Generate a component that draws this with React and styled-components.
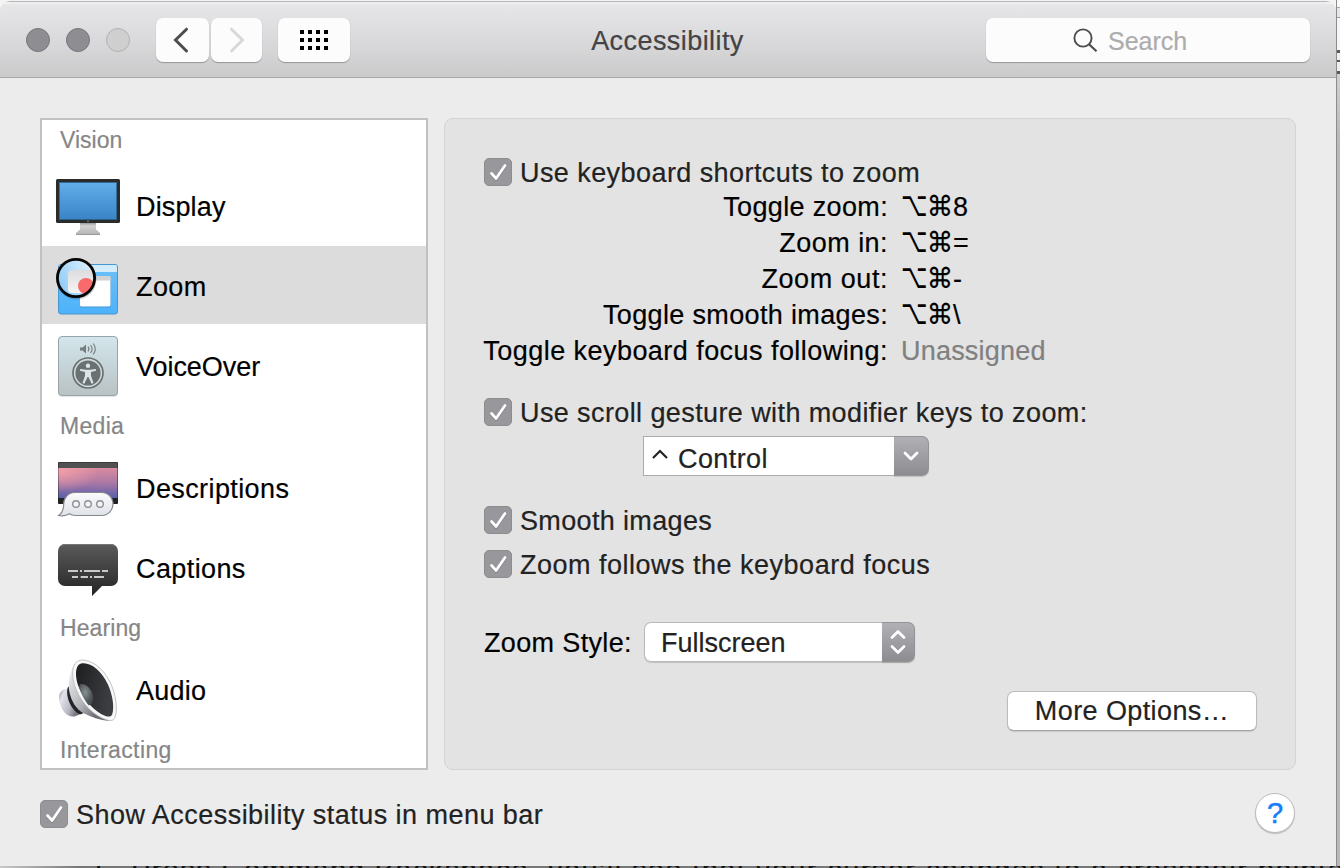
import React from 'react';
import styled, { createGlobalStyle } from 'styled-components';

const Global = createGlobalStyle`
  * { box-sizing: border-box; }
  body {
    margin: 0;
    overflow: hidden;
    background: #cfcfcf;
    font-family: "Liberation Sans", Arial, sans-serif;
    font-size: 27px;
    color: #000;
    -webkit-text-stroke: 0.2px currentColor;
  }
  svg { display: block; }
`;

const Desktop = styled.div`
  width: 1340px;
  height: 868px;
  display: flex;
  flex-direction: column;
  overflow: hidden;
  background: linear-gradient(#f4f4f4 0 30px, #b0b0b0 80px);
`;
const Upper = styled.div`
  display: flex;
  flex: 0 0 866px;
`;
const Backdrop = styled.div`
  flex: 0 0 4px;
  border-left: 1px solid #8c8c8c;
  background: linear-gradient(
    #fafafa 0 7px, #a8a8a8 7px 8px, #e6e6e6 8px 17px, #9a9a9a 17px 18px,
    #f6f6f6 18px 50px, #5a5a5e 50px 53px, #f0f0f0 53px 60px, #5a5a5e 60px 62px,
    #eee 62px 71px, #5a5a5e 71px 74px, #cfcfcf 74px 78px, #b9b9b9 140px 100%
  );
`;
const Underlay = styled.div`
  flex: 0 0 2px;
  height: 2px;
  overflow: hidden;
  display: flex;
  gap: 14px;
  padding-left: 90px;
  background: linear-gradient(90deg, #c8c8c8, #777 80px);
  font-size: 29px;
  line-height: 8px;
  letter-spacing: 1.4px;
  white-space: nowrap;
  color: #111;
`;

const Window = styled.main`
  flex: 0 0 1336px;
  display: flex;
  flex-direction: column;
  margin-top: 1px;
  border-radius: 10px 10px 0 0;
  overflow: hidden;
  background: #ececec;
`;
const TitleBar = styled.header`
  flex: 0 0 77px;
  display: flex;
  align-items: flex-start;
  padding: 16px 26px 0;
  border-top: 1px solid #b4b4b4;
  border-bottom: 1px solid #a9a9a9;
  background: linear-gradient(#f4f4f4 0, #e6e5e7 3px, #d9d8da 40px, #cbcacb 100%);
`;
const Lights = styled.div`
  display: flex;
  gap: 16px;
  margin-top: 10px;
  width: 130px;
`;
const Light = styled.span`
  width: 24px;
  height: 24px;
  border-radius: 50%;
  border: 1px solid ${(p) => (p.$off ? '#b1b0b2' : '#77767a')};
  background: ${(p) => (p.$off ? '#d0cfd0' : '#8e8d92')};
`;
const ToolButton = styled.button`
  width: ${(p) => p.$w}px;
  height: 44px;
  margin: 0 ${(p) => p.$gap}px 0 0;
  padding: 0 1px 0 0;
  display: flex;
  align-items: center;
  justify-content: center;
  border: 0;
  border-radius: 7px;
  background: #fcfcfc;
  box-shadow: 0 1px 1px rgba(0, 0, 0, 0.28);
`;
const Title = styled.h1`
  flex: 1;
  margin: 0;
  padding-right: 1px;
  font-size: 27px;
  font-weight: 400;
  line-height: 46px;
  letter-spacing: 0.43px;
  text-align: center;
  color: #444345;
`;
const SearchField = styled.div`
  width: 324px;
  height: 44px;
  display: flex;
  align-items: center;
  padding-left: 87px;
  gap: 9px;
  border-radius: 7px;
  background: #fcfcfc;
  box-shadow: 0 1px 1px rgba(0, 0, 0, 0.28);
  color: #acacac;
  font-size: 25px;
  line-height: 46px;
  span { padding-top: 2px; }
`;

const Body = styled.div`
  flex: 0 0 692px;
  display: flex;
  gap: 16px;
  padding: 40px 0 0 40px;
`;
const Sidebar = styled.nav`
  width: 388px;
  height: 652px;
  overflow: hidden;
  border: 2px solid #c1c1c1;
  background: #fff;
`;
const Group = styled.h2`
  margin: 0;
  height: ${(p) => (p.$first ? 46 : 42)}px;
  padding-left: 18px;
  font-size: 23px;
  font-weight: 400;
  line-height: 41px;
  letter-spacing: ${(p) => p.$ls ?? 0.1}px;
  color: #868686;
`;
const Item = styled.div`
  height: 80px;
  display: flex;
  align-items: center;
  gap: 16px;
  padding-left: 14px;
  border-bottom: 2px solid #fff;
  background: ${(p) => (p.$selected ? '#dcdcdc' : '#fff')};
  svg { margin-top: 2px; }
`;
const Label = styled.span`
  line-height: 30px;
  margin-top: 3px;
  letter-spacing: ${(p) => p.$ls ?? 0.4}px;
  white-space: nowrap;
`;

const Panel = styled.section`
  width: 852px;
  height: 652px;
  padding: 39px 38px 0 39px;
  border: 1px solid #d3d3d3;
  border-radius: 9px;
  background: #e3e3e3;
`;
const CheckRow = styled.label`
  height: 28px;
  display: flex;
  align-items: center;
  gap: 8px;
  margin-bottom: ${(p) => p.$mb ?? 0}px;
  color: #222;
  letter-spacing: ${(p) => p.$ls ?? 0.43}px;
  white-space: nowrap;
`;
const CheckText = styled.span`
  padding-top: 3px;
  line-height: 29px;
`;
const Box = styled.span`
  width: 28px;
  height: 28px;
  border-radius: 5px;
  border: 1px solid #8d8c91;
  background: #98979c;
`;
const Shortcuts = styled.dl`
  margin: 3px 0 29px;
  display: grid;
  grid-template-columns: 404px 1fr;
  grid-auto-rows: 36px;
  column-gap: 13px;
  line-height: 36px;
  white-space: nowrap;
`;
const Term = styled.dt`
  display: flex;
  justify-content: flex-end;
  letter-spacing: ${(p) => p.$ls ?? 0.45}px;
`;
const Keys = styled.dd`
  margin: 0;
  display: flex;
  color: ${(p) => (p.$muted ? '#808080' : '#000')};
  letter-spacing: ${(p) => (p.$muted ? 0.2 : 0)}px;
`;
const OptionKey = styled.span`
  width: 26px;
  font-family: "DejaVu Sans", sans-serif;
  font-size: 23px;
  -webkit-text-stroke: 0;
  transform: translateY(-3px) scaleY(1.5);
  transform-origin: 50% 52%;
`;
const CommandKey = styled.span`
  width: 26px;
  font-family: "DejaVu Sans", sans-serif;
  font-size: 26px;
  transform: translateY(-1px) scaleY(1.08);
`;

const Combo = styled.div`
  width: 286px;
  height: 40px;
  margin: 10px 0 30px 159px;
  display: flex;
`;
const ComboText = styled.div`
  flex: 1;
  display: flex;
  align-items: flex-start;
  gap: 10px;
  padding-left: 8px;
  border: 1px solid #ababab;
  border-right: 0;
  background: #fff;
  color: #222;
  line-height: 44px;
  letter-spacing: 0.4px;
  svg { margin-top: 12px; }
`;
const Stepper = styled.div`
  width: ${(p) => p.$w}px;
  display: flex;
  align-items: center;
  justify-content: center;
  border-radius: 0 7px 7px 0;
  border: solid #939297;
  border-width: 1px 1px 1px 0;
  background: linear-gradient(#b1b0b5, #8d8c91);
  box-shadow: 0 1px 1px rgba(0, 0, 0, 0.15);
`;
const StyleRow = styled.div`
  margin-top: 44px;
  height: 40px;
  display: flex;
  align-items: center;
  line-height: 41px;
`;
const StyleName = styled.span`
  width: 160px;
  padding-top: 3px;
  letter-spacing: 0.35px;
`;
const Popup = styled.div`
  width: 271px;
  height: 40px;
  display: flex;
  border-radius: 7px;
  box-shadow: 0 1px 1px rgba(0, 0, 0, 0.15);
`;
const PopupText = styled.div`
  flex: 1;
  padding-left: 16px;
  border: 1px solid #b9b9b9;
  border-right: 0;
  border-radius: 7px 0 0 7px;
  background: #fff;
  color: #222;
  line-height: 40px;
`;
const MoreButton = styled.button`
  display: block;
  width: 250px;
  height: 40px;
  margin: 29px 0 0 auto;
  padding: 0;
  border: 1px solid #bcbcbc;
  border-bottom-color: #a5a5a5;
  border-radius: 7px;
  background: #fff;
  box-shadow: 0 1px 1px rgba(0, 0, 0, 0.12);
  font: inherit;
  line-height: 38px;
  letter-spacing: 0.4px;
  color: #222;
`;
const Footer = styled.footer`
  display: flex;
  justify-content: space-between;
  align-items: center;
  height: 88px;
  padding: 0 41px 0 40px;
`;
const Help = styled.button`
  width: 40px;
  height: 40px;
  margin-top: -2px;
  padding: 0;
  border: 1px solid #bdbdbd;
  border-radius: 50%;
  background: #fff;
  box-shadow: 0 1px 1px rgba(0, 0, 0, 0.2);
  font: 500 29px/38px "Liberation Sans", sans-serif;
  -webkit-text-stroke: 0.5px #157efb;
  color: #157efb;
`;

const Check = ({ children, ...rest }) => (
  <CheckRow {...rest}>
    <Box>
      <svg width="26" height="26" viewBox="0 0 26 26" fill="none" strokeLinecap="round" strokeLinejoin="round">
        <path d="M6.500 15.500l4.600 5L20 7.500" stroke="#000" strokeOpacity=".15" strokeWidth="2.800" />
        <path d="M6.500 14.500l4.600 5L20 6.500" stroke="#fff" strokeWidth="2.700" />
      </svg>
    </Box>
    <CheckText>{children}</CheckText>
  </CheckRow>
);

const DisplayIcon = () => (
  <svg width="64" height="64" viewBox="0 0 64 64">
    <defs>
      <linearGradient id="screen" x2="0" y2="1"><stop stopColor="#61aeea" /><stop offset="1" stopColor="#3a84c6" /></linearGradient>
      <linearGradient id="stand" x2="0" y2="1"><stop stopColor="#8a8a8a" /><stop offset=".3" stopColor="#d2d2d2" /><stop offset="1" stopColor="#b2b2b2" /></linearGradient>
    </defs>
    <path d="M24 48h16v7.500l4 3.500v2H20v-2l4-3.500z" fill="url(#stand)" />
    <path d="M20 60.500h24" stroke="#999" />
    <rect y="5" width="64" height="44" rx="1.500" fill="#2a2c2c" />
    <rect x="3.300" y="8.500" width="57.400" height="37" fill="url(#screen)" stroke="#2a6596" strokeWidth=".6" />
    <circle cx="32" cy="47.200" r=".8" fill="#999" />
  </svg>
);

const ZoomIcon = () => (
  <svg width="64" height="64" viewBox="0 0 64 64">
    <defs>
      <linearGradient id="desk" x2="0" y2="1"><stop stopColor="#6ec0f6" /><stop offset="1" stopColor="#4db2fb" /></linearGradient>
      <linearGradient id="lens" x1="1" x2="0" y2=".6"><stop stopColor="#f2f9ff" /><stop offset="1" stopColor="#8fcbf7" /></linearGradient>
      <linearGradient id="pane" x2="0" y2="1"><stop stopColor="#dcdcde" /><stop offset="1" stopColor="#f8f4f4" /></linearGradient>
      <clipPath id="lensClip"><circle cx="20" cy="24" r="18.500" /></clipPath>
    </defs>
    <rect x="2.500" y="10.500" width="59" height="49.500" rx="2.500" fill="url(#desk)" stroke="#4795cf" />
    <path d="M3 18v-5a2 2 0 0 1 2-2h54a2 2 0 0 1 2 2v5z" fill="#d3ecfc" />
    <rect x="21" y="22.500" width="31" height="31" rx="1.500" fill="#2c78b4" opacity=".5" transform="translate(3 0)" />
    <rect x="24" y="22" width="30.500" height="30.500" rx="1.500" fill="#fff" />
    <path d="M24 26.500v-3a1.500 1.500 0 0 1 1.500-1.500h27.500a1.500 1.500 0 0 1 1.500 1.500v3z" fill="#d2d2d2" />
    <circle cx="20.500" cy="25.500" r="20" fill="#000" opacity=".18" />
    <g clipPath="url(#lensClip)">
      <rect width="40" height="44" fill="url(#lens)" />
      <rect x="12" y="16" width="40" height="23" rx="4" fill="url(#pane)" />
      <circle cx="30" cy="32" r="8" fill="#f96b6b" />
    </g>
    <circle cx="20" cy="24" r="18.600" fill="none" stroke="#050505" strokeWidth="2.800" />
  </svg>
);

const VoiceOverIcon = () => (
  <svg width="64" height="64" viewBox="0 0 64 64">
    <defs>
      <linearGradient id="plate" x2="0" y2="1"><stop stopColor="#d3e6eb" /><stop offset="1" stopColor="#b9c2c4" /></linearGradient>
    </defs>
    <rect x="2" y="3" width="60" height="60" rx="4" fill="#000" opacity=".1" />
    <rect x="2.500" y="2.500" width="59" height="59" rx="3.500" fill="url(#plate)" stroke="#98a4a7" />
    <path d="M24 13.500h2.500l3.500-3v9l-3.500-3H24z" fill="#747c7e" />
    <path d="M32 12.600q1.800 2.400 0 4.800M34.600 11q3 4 0 8M37.200 9.500q4.300 5.500 0 11" fill="none" stroke="#747c7e" strokeWidth="1.100" />
    <circle cx="32" cy="39" r="15" fill="#d0d9db" stroke="#697173" strokeWidth="1.700" />
    <circle cx="32" cy="39" r="12.600" fill="#697173" />
    <circle cx="32" cy="31.700" r="2.200" fill="#dce3e5" />
    <path d="M24 35l5.800.8h4.400L40 35v1.800l-5 1.300v3.600l2.500 7.400-1.800.6L32.400 43h-.8l-3.300 6.700-1.800-.6 2.500-7.400v-3.600l-5-1.300z" fill="#dce3e5" />
  </svg>
);

const DescriptionsIcon = () => (
  <svg width="64" height="64" viewBox="0 0 64 64">
    <defs>
      <linearGradient id="sky" x2="0" y2="1"><stop stopColor="#d98ba0" /><stop offset=".45" stopColor="#b07aa4" /><stop offset="1" stopColor="#595eaa" /></linearGradient>
      <radialGradient id="glow" cx="0" cy=".1" r=".7"><stop stopColor="#fba6aa" stopOpacity=".75" /><stop offset="1" stopColor="#fba6aa" stopOpacity="0" /></radialGradient>
      <linearGradient id="cloud" x2="0" y2="1"><stop stopColor="#fafbfc" /><stop offset="1" stopColor="#dfe2e8" /></linearGradient>
    </defs>
    <rect x="2" y="6" width="60" height="42" rx="1" fill="#222" />
    <rect x="2.500" y="6.500" width="59" height="5.500" fill="#515151" />
    <rect x="2.500" y="12" width="59" height="30" fill="url(#sky)" />
    <rect x="2.500" y="12" width="59" height="30" fill="url(#glow)" />
    <path d="M19 36.500h26.500a11.500 11.500 0 0 1 0 23H19c-2.500 0-4-.6-5.500-1.700-3 1.900-7 2.400-11 1.700 3.500-2.300 5.200-5.500 5.200-11C7.500 42 12 36.500 19 36.500z" fill="url(#cloud)" stroke="#858890" strokeWidth="1.200" />
    <g fill="#f3f4f6" stroke="#8f9094" strokeWidth="1.400">
      <circle cx="20" cy="48" r="3.300" /><circle cx="32" cy="48" r="3.300" /><circle cx="44" cy="48" r="3.300" />
    </g>
  </svg>
);

const CaptionsIcon = () => (
  <svg width="64" height="64" viewBox="0 0 64 64">
    <defs>
      <linearGradient id="bubble" x2="0" y2="1"><stop stopColor="#5b5b5b" /><stop offset="1" stopColor="#242424" /></linearGradient>
    </defs>
    <path d="M9 8h46a7 7 0 0 1 7 7v28a7 7 0 0 1-7 7h-9L36 60V50H9a7 7 0 0 1-7-7V15a7 7 0 0 1 7-7z" fill="url(#bubble)" />
    <path d="M5 9.700Q7 8.500 9 8.500h46q2 0 4 1.200" fill="none" stroke="#777" />
    <path d="M12 35h10M24 35h2M28 35h16M46 35h6M16 41h6M24.700 41H32M34 41h2M38 41h10" stroke="#c9c9c9" strokeWidth="2" />
  </svg>
);

const AudioIcon = () => (
  <svg width="64" height="64" viewBox="0 0 64 64">
    <defs>
      <linearGradient id="cone" x2="1" y2="1"><stop stopColor="#f4f4f6" /><stop offset=".5" stopColor="#b4b5bb" /><stop offset=".8" stopColor="#6b6c72" /></linearGradient>
      <linearGradient id="cap" x2="1" y2=".6"><stop stopColor="#84868e" /><stop offset=".25" stopColor="#e3e3ec" /><stop offset=".7" stopColor="#b8b9c3" /><stop offset="1" stopColor="#74757d" /></linearGradient>
      <linearGradient id="dish" x2="1" y2=".3"><stop stopColor="#1d1e20" /><stop offset="1" stopColor="#3c3d40" /></linearGradient>
      <radialGradient id="dome" cx=".45" cy=".4"><stop stopColor="#889094" /><stop offset="1" stopColor="#4b5054" /></radialGradient>
    </defs>
    <path d="M10 31C4 32 2 37 3.500 44c2 9 8 15.500 15 14.500l5-2L14 30z" fill="url(#cap)" />
    <path d="M12 29c-3 7 2 23 12 27.500l5-2L17 27z" fill="#232427" />
    <path d="M17.500 7c-3.500 8-5.500 17-4.500 25 2 11 7 19 14 23 8 4 17 7 26 8L40 20z" fill="url(#cone)" />
    <path d="M24.500 2.200C35 1 47 10 54 24c6 12 8 27 5 35.500-1 3-4 3.700-8 2.500C38 58 26 46 20 31 15 19 15 3.500 24.500 2.200z" fill="#f7f7f8" stroke="#b4b5ba" strokeWidth=".8" />
    <path d="M26.500 5.300C35.500 4.600 45.500 13 51.700 26c5 10.500 6.800 23.500 4.600 30-1 3-3.800 3-6.800 2C39 54 28.500 43 23 29.500 18.700 19 18.500 6 26.500 5.300z" fill="url(#dish)" />
    <path d="M24 26c6-1 12 5 13 12 .5 4-1 8-4 9.500C28.500 43 25 35 22.800 29z" fill="url(#dome)" />
  </svg>
);

const shortcuts = [
  { name: 'Toggle zoom:', key: '8', ls: 0.35 },
  { name: 'Zoom in:', key: '=', ls: 0.45 },
  { name: 'Zoom out:', key: '-', ls: 0.55 },
  { name: 'Toggle smooth images:', key: '\\', ls: 0.35 },
];

export default function App() {
  return (
    <>
      <Global />
      <Desktop>
        <Upper>
          <Window>
            <TitleBar>
              <Lights><Light /><Light /><Light $off /></Lights>
              <ToolButton $w={53} $gap={2} aria-label="Back">
                <svg width="20" height="28" viewBox="0 0 20 28"><path d="M14.500 3.200L3.500 14l11 11" fill="none" stroke="#4d4d4d" strokeWidth="3" strokeLinecap="round" /></svg>
              </ToolButton>
              <ToolButton $w={51} $gap={16} aria-label="Forward">
                <svg width="20" height="28" viewBox="0 0 20 28"><path d="M5.500 3.200L16.500 14l-11 11" fill="none" stroke="#d8d8d8" strokeWidth="3" strokeLinecap="round" /></svg>
              </ToolButton>
              <ToolButton $w={72} $gap={0} aria-label="Show all">
                <svg width="28" height="20" viewBox="0 0 28 20">
                  {[0, 8, 16].map((y) => [0, 8, 16, 24].map((x) => <rect key={`${x}-${y}`} x={x} y={y} width="4" height="4" />))}
                </svg>
              </ToolButton>
              <Title>Accessibility</Title>
              <SearchField>
                <svg width="26" height="26" viewBox="0 0 26 26" fill="none" stroke="#4c4c4c" strokeWidth="1.900"><circle cx="10" cy="11" r="8.600" /><path d="M16 17.300l7.500 7" strokeWidth="2.200" /></svg>
                <span>Search</span>
              </SearchField>
            </TitleBar>
            <Body>
              <Sidebar>
                <Group $first $ls={0}>Vision</Group>
                <Item><DisplayIcon /><Label $ls={0.15}>Display</Label></Item>
                <Item $selected><ZoomIcon /><Label>Zoom</Label></Item>
                <Item><VoiceOverIcon /><Label $ls={-0.05}>VoiceOver</Label></Item>
                <Group $ls={0.3}>Media</Group>
                <Item><DescriptionsIcon /><Label>Descriptions</Label></Item>
                <Item><CaptionsIcon /><Label>Captions</Label></Item>
                <Group>Hearing</Group>
                <Item><AudioIcon /><Label $ls={0.25}>Audio</Label></Item>
                <Group $ls={0.4}>Interacting</Group>
              </Sidebar>
              <Panel>
                <Check>Use keyboard shortcuts to zoom</Check>
                <Shortcuts>
                  {shortcuts.map((s) => (
                    <React.Fragment key={s.name}>
                      <Term $ls={s.ls}>{s.name}</Term>
                      <Keys><OptionKey>⌥</OptionKey><CommandKey>⌘</CommandKey>{s.key}</Keys>
                    </React.Fragment>
                  ))}
                  <Term>Toggle keyboard focus following:</Term>
                  <Keys $muted>Unassigned</Keys>
                </Shortcuts>
                <Check $ls={0.4}>Use scroll gesture with modifier keys to zoom:</Check>
                <Combo>
                  <ComboText>
                    <svg width="16" height="10" viewBox="0 0 16 10"><path d="M1 9l7-7 7 7" fill="none" stroke="#222" strokeWidth="2.200" /></svg>
                    Control
                  </ComboText>
                  <Stepper $w={35}>
                    <svg width="18" height="12" viewBox="0 0 18 12"><path d="M3 3l6 6 6-6" fill="none" stroke="#fff" strokeWidth="2.800" strokeLinecap="round" strokeLinejoin="round" /></svg>
                  </Stepper>
                </Combo>
                <Check $mb={16} $ls={0.35}>Smooth images</Check>
                <Check $ls={0.5}>Zoom follows the keyboard focus</Check>
                <StyleRow>
                  <StyleName>Zoom Style:</StyleName>
                  <Popup>
                    <PopupText>Fullscreen</PopupText>
                    <Stepper $w={33}>
                      <svg width="18" height="28" viewBox="0 0 18 28"><path d="M3 9.500l6-6 6 6M3 18.500l6 6 6-6" fill="none" stroke="#fff" strokeWidth="2.700" strokeLinecap="round" strokeLinejoin="round" /></svg>
                    </Stepper>
                  </Popup>
                </StyleRow>
                <MoreButton>More Options…</MoreButton>
              </Panel>
            </Body>
            <Footer>
              <Check $ls={0.46}>Show Accessibility status in menu bar</Check>
              <Help>?</Help>
            </Footer>
          </Window>
          <Backdrop />
        </Upper>
        <Underlay><span>1.</span><span>Press Command Backspace, you’ll see that your cursor changes to a crosshair pointer</span></Underlay>
      </Desktop>
    </>
  );
}
